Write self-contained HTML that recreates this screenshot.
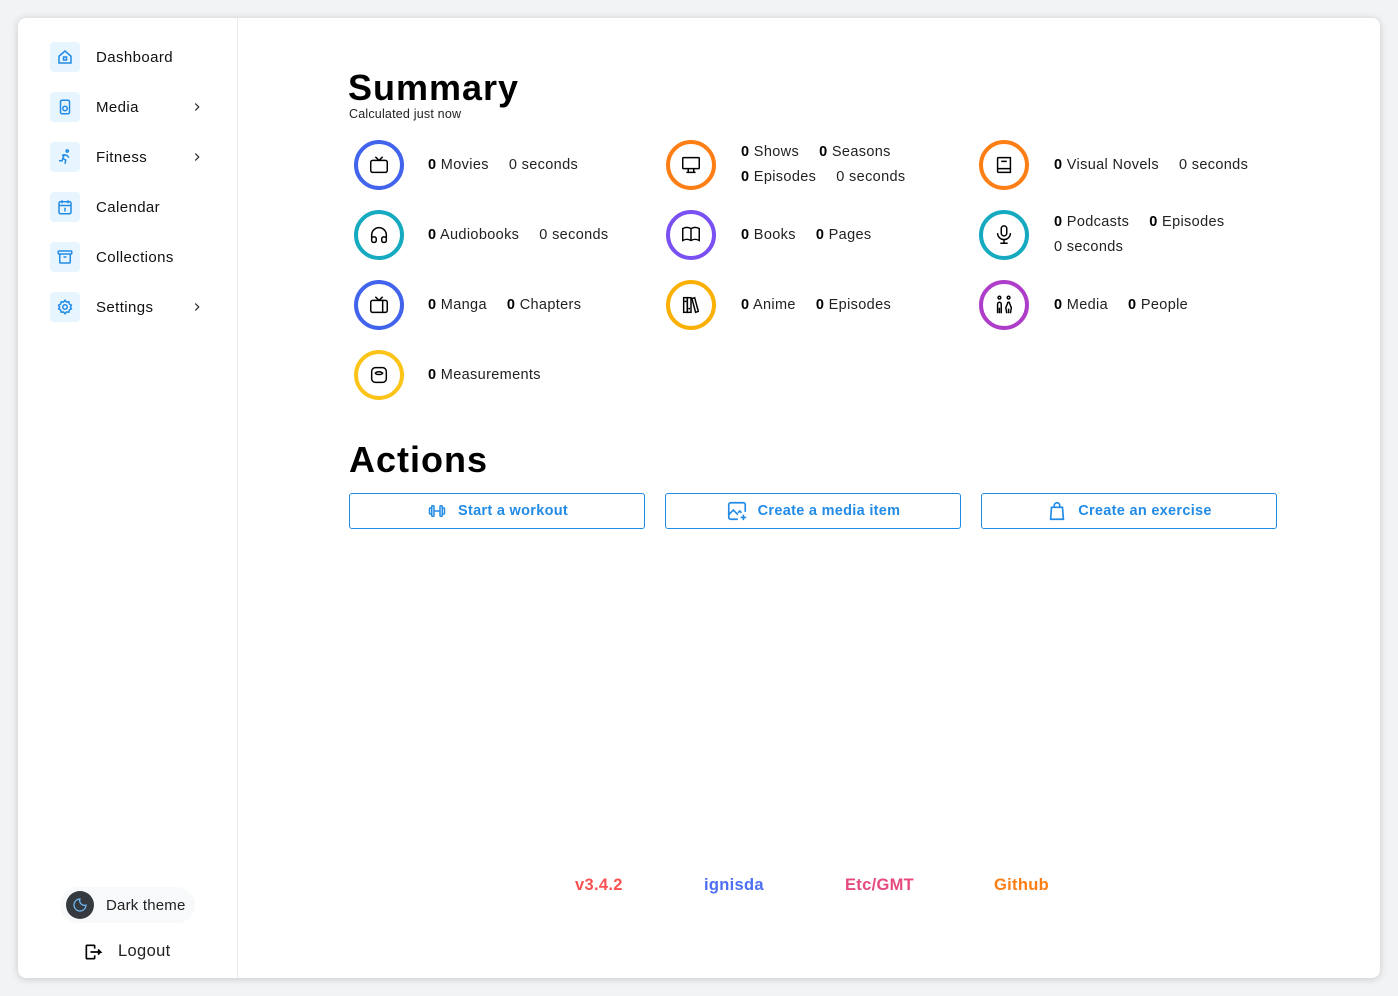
<!DOCTYPE html>
<html><head><meta charset="utf-8"><style>
*{box-sizing:border-box;margin:0;padding:0}
body{width:1398px;height:996px;background:#f1f3f5;font-family:"Liberation Sans",sans-serif;color:#000;position:relative;overflow:hidden}
.card{position:absolute;left:18px;top:18px;width:1362px;height:960px;background:#fff;border-radius:8px;box-shadow:0 1px 8px rgba(0,0,0,.18)}
.side{position:absolute;left:18px;top:18px;width:220px;height:960px;border-right:1px solid #e9ecef}
.nav{position:absolute;left:50px;height:30px;width:160px}
.nav .ic{position:absolute;left:0;top:0;width:30px;height:30px;background:#e7f5ff;border-radius:4px;display:flex;align-items:center;justify-content:center}
.nav .t{position:absolute;left:46px;top:7px;font-size:15px;color:#111;letter-spacing:.4px}
.nav .ch{position:absolute;left:140px;top:8px}
.circ{position:absolute;width:50px;height:50px;border-radius:50%;border:4px solid;display:flex;align-items:center;justify-content:center}
.tx{position:absolute;font-size:14.5px;color:#222;white-space:nowrap;letter-spacing:.35px}
.tx b{color:#000}
.tx span{margin-right:20px}
h1{position:absolute;font-size:36px;font-weight:bold;letter-spacing:1px}
.btn{position:absolute;top:493px;width:296px;height:36px;border:1px solid #228be6;border-radius:3px;color:#228be6;font-weight:bold;font-size:14.5px;display:flex;align-items:center;justify-content:center;gap:10px;letter-spacing:.3px}
.ft{position:absolute;top:876px;font-weight:bold;font-size:16.5px;letter-spacing:.3px}
</style></head><body>
<div class="card"></div>
<div class="side"></div>
<div class="nav" style="top:42px"><div class="ic"><svg width="18" height="18" viewBox="0 0 24 24" fill="none" stroke="#228be6" stroke-width="2"><path d="M4 11l8-7 8 7v9H4z"/><rect x="10" y="12" width="4" height="4"/></svg></div><div class="t">Dashboard</div></div>
<div class="nav" style="top:92px"><div class="ic"><svg width="18" height="18" viewBox="0 0 24 24" fill="none" stroke="#228be6" stroke-width="2"><rect x="6" y="3" width="12" height="18" rx="2"/><circle cx="12" cy="14" r="3"/><path d="M12 7v.1"/></svg></div><div class="t">Media</div><div class="ch"><svg width="14" height="14" viewBox="0 0 24 24" fill="none" stroke="#222" stroke-width="2"><path d="M9 6l6 6-6 6"/></svg></div></div>
<div class="nav" style="top:142px"><div class="ic"><svg width="18" height="18" viewBox="0 0 24 24" fill="none" stroke="#228be6" stroke-width="2"><circle cx="15" cy="4" r="1.5"/><path d="M4 17h4l1-3 4 2-1 5M9 14l2-5 4 1 2 3M11 9l-3 1"/></svg></div><div class="t">Fitness</div><div class="ch"><svg width="14" height="14" viewBox="0 0 24 24" fill="none" stroke="#222" stroke-width="2"><path d="M9 6l6 6-6 6"/></svg></div></div>
<div class="nav" style="top:192px"><div class="ic"><svg width="18" height="18" viewBox="0 0 24 24" fill="none" stroke="#228be6" stroke-width="2"><rect x="4" y="5" width="16" height="16" rx="2"/><path d="M8 3v4M16 3v4M4 10h16M11 14h1v4"/></svg></div><div class="t">Calendar</div></div>
<div class="nav" style="top:242px"><div class="ic"><svg width="18" height="18" viewBox="0 0 24 24" fill="none" stroke="#228be6" stroke-width="2"><rect x="3" y="4" width="18" height="4" rx="1"/><path d="M5 8v11a1 1 0 001 1h12a1 1 0 001-1V8M10 12h4"/></svg></div><div class="t">Collections</div></div>
<div class="nav" style="top:292px"><div class="ic"><svg width="18" height="18" viewBox="0 0 24 24" fill="none" stroke="#228be6" stroke-width="2"><circle cx="12" cy="12" r="3"/><path d="M12 3l2 2.5 3-.5.8 3 2.7 1.5-1.3 2.5 1.3 2.5-2.7 1.5-.8 3-3-.5L12 21l-2-2.5-3 .5-.8-3L3.5 14.5 4.8 12 3.5 9.5 6.2 8 7 5l3 .5z"/></svg></div><div class="t">Settings</div><div class="ch"><svg width="14" height="14" viewBox="0 0 24 24" fill="none" stroke="#222" stroke-width="2"><path d="M9 6l6 6-6 6"/></svg></div></div>

<div style="position:absolute;left:60px;top:887px;width:135px;height:36px;background:#f8f9fa;border-radius:18px"></div>
<div style="position:absolute;left:66px;top:891px;width:28px;height:28px;background:#343a40;border-radius:50%;display:flex;align-items:center;justify-content:center"><svg width="16" height="16" viewBox="0 0 24 24" fill="none" stroke="#74c0fc" stroke-width="1.8"><path d="M12 3a7 7 0 009 9 9 9 0 11-9-9z"/></svg></div>
<div class="tx" style="left:106px;top:897px;font-size:15px;letter-spacing:.2px">Dark theme</div>
<svg style="position:absolute;left:83px;top:942px" width="20" height="20" viewBox="0 0 24 24" fill="none" stroke="#000" stroke-width="2"><path d="M14 8V5a1 1 0 00-1-1H5a1 1 0 00-1 1v14a1 1 0 001 1h8a1 1 0 001-1v-3M9 12h12l-3-3M21 12l-3 3"/></svg>
<div class="tx" style="left:118px;top:942px;font-size:16.5px">Logout</div>

<h1 style="left:348px;top:67px">Summary</h1>
<div class="tx" style="left:349px;top:107px;font-size:12.5px;letter-spacing:.2px">Calculated just now</div>

<div class="circ" style="left:354px;top:140px;border-color:#4263eb"><svg width="22" height="22" viewBox="0 0 24 24" fill="none" stroke="#000" stroke-width="1.6"><rect x="3" y="7" width="18" height="13" rx="2"/><path d="M8 3l4 4 4-4"/></svg></div>
<div class="tx" style="left:428px;top:157px"><span><b>0</b> Movies</span><span>0 seconds</span></div>
<div class="circ" style="left:666px;top:140px;border-color:#fd7e14"><svg width="22" height="22" viewBox="0 0 24 24" fill="none" stroke="#000" stroke-width="1.6"><rect x="3" y="4" width="18" height="12" rx="1"/><path d="M7 20h10M9 16v4M15 16v4"/></svg></div>
<div class="tx" style="left:741px;top:144px"><span><b>0</b> Shows</span><span><b>0</b> Seasons</span></div>
<div class="tx" style="left:741px;top:169px"><span><b>0</b> Episodes</span><span>0 seconds</span></div>
<div class="circ" style="left:979px;top:140px;border-color:#fd7e14"><svg width="22" height="22" viewBox="0 0 24 24" fill="none" stroke="#000" stroke-width="1.6"><path d="M6 4h13v16H6a1 1 0 01-1-1V5a1 1 0 011-1zM5 16h14M9 8h6"/></svg></div>
<div class="tx" style="left:1054px;top:157px"><span><b>0</b> Visual Novels</span><span>0 seconds</span></div>

<div class="circ" style="left:354px;top:210px;border-color:#15aabf"><svg width="22" height="22" viewBox="0 0 24 24" fill="none" stroke="#000" stroke-width="1.6"><path d="M4 15v-3a8 8 0 0116 0v3"/><rect x="4" y="14" width="5" height="6" rx="2"/><rect x="15" y="14" width="5" height="6" rx="2"/></svg></div>
<div class="tx" style="left:428px;top:227px"><span><b>0</b> Audiobooks</span><span>0 seconds</span></div>
<div class="circ" style="left:666px;top:210px;border-color:#7950f2"><svg width="22" height="22" viewBox="0 0 24 24" fill="none" stroke="#000" stroke-width="1.6"><path d="M3 5a9 9 0 019 0 9 9 0 019 0v13a9 9 0 00-9 0 9 9 0 00-9 0zM12 5v13"/></svg></div>
<div class="tx" style="left:741px;top:227px"><span><b>0</b> Books</span><span><b>0</b> Pages</span></div>
<div class="circ" style="left:979px;top:210px;border-color:#15aabf"><svg width="22" height="22" viewBox="0 0 24 24" fill="none" stroke="#000" stroke-width="1.6"><rect x="9" y="2" width="6" height="11" rx="3"/><path d="M5 10a7 7 0 0014 0M12 17v4M8 21h8"/></svg></div>
<div class="tx" style="left:1054px;top:214px"><span><b>0</b> Podcasts</span><span><b>0</b> Episodes</span></div>
<div class="tx" style="left:1054px;top:239px">0 seconds</div>

<div class="circ" style="left:354px;top:280px;border-color:#4263eb"><svg width="22" height="22" viewBox="0 0 24 24" fill="none" stroke="#000" stroke-width="1.6"><rect x="3" y="7" width="18" height="13" rx="2"/><path d="M8 3l4 4 4-4M16 7v13M18.5 11v.1M18.5 14v.1"/></svg></div>
<div class="tx" style="left:428px;top:297px"><span><b>0</b> Manga</span><span><b>0</b> Chapters</span></div>
<div class="circ" style="left:666px;top:280px;border-color:#fab005"><svg width="22" height="22" viewBox="0 0 24 24" fill="none" stroke="#000" stroke-width="1.6"><rect x="4" y="4" width="4" height="16"/><rect x="8" y="4" width="4" height="16"/><path d="M5 8h2M9 16h2M13 5l3-1 4 15-3 1z"/></svg></div>
<div class="tx" style="left:741px;top:297px"><span><b>0</b> Anime</span><span><b>0</b> Episodes</span></div>
<div class="circ" style="left:979px;top:280px;border-color:#ae3ec9"><svg width="22" height="22" viewBox="0 0 24 24" fill="none" stroke="#000" stroke-width="1.6"><circle cx="7" cy="4" r="1.5"/><circle cx="17" cy="4" r="1.5"/><path d="M5 21V11a2 2 0 014 0v10M7 15v6M15 21l-1-6 2-5a1 1 0 012 0l2 5-1 6M17 16v5"/></svg></div>
<div class="tx" style="left:1054px;top:297px"><span><b>0</b> Media</span><span><b>0</b> People</span></div>

<div class="circ" style="left:354px;top:350px;border-color:#fcc419"><svg width="22" height="22" viewBox="0 0 24 24" fill="none" stroke="#000" stroke-width="1.6"><rect x="4" y="4" width="16" height="16" rx="4"/><path d="M8 10c2-2 6-2 8 0-1 2-7 2-8 0z"/></svg></div>
<div class="tx" style="left:428px;top:367px"><b>0</b> Measurements</div>

<h1 style="left:349px;top:439px">Actions</h1>
<div class="btn" style="left:349px"><svg width="22" height="18" viewBox="0 0 24 24" fill="none" stroke="#228be6" stroke-width="2"><rect x="2" y="8" width="3" height="8" rx="1"/><rect x="5" y="5" width="3" height="14" rx="1"/><rect x="16" y="5" width="3" height="14" rx="1"/><rect x="19" y="8" width="3" height="8" rx="1"/><path d="M8 12h8"/></svg>Start a workout</div>
<div class="btn" style="left:665px"><svg width="22" height="22" viewBox="0 0 24 24" fill="none" stroke="#228be6" stroke-width="1.8"><path d="M13 21H5a2 2 0 01-2-2V5a2 2 0 012-2h14a2 2 0 012 2v8"/><path d="M3 16l5-5 5 5M13 14l2-2 2 2M15 7v.1M19 16v6M16 19h6"/></svg>Create a media item</div>
<div class="btn" style="left:981px"><svg width="22" height="22" viewBox="0 0 24 24" fill="none" stroke="#228be6" stroke-width="1.8"><path d="M9 8V6a3 3 0 016 0v2M6 8h12l1 13H5z"/></svg>Create an exercise</div>

<div class="ft" style="left:575px;color:#fa5252">v3.4.2</div>
<div class="ft" style="left:704px;color:#4c6ef5">ignisda</div>
<div class="ft" style="left:845px;color:#e64980">Etc/GMT</div>
<div class="ft" style="left:994px;color:#fd7e14">Github</div>
</body></html>
